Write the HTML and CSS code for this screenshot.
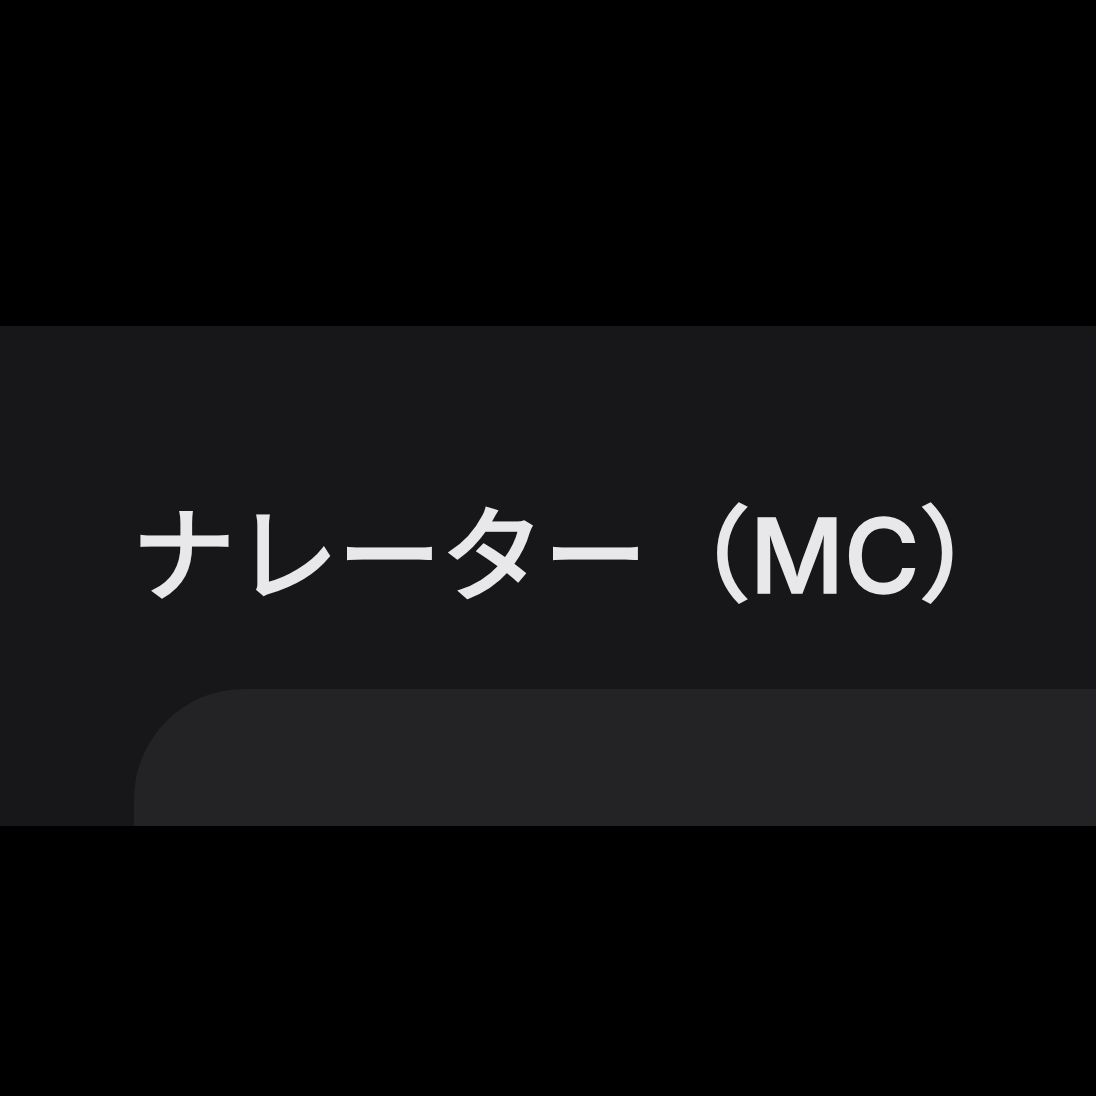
FILE: index.html
```html
<!DOCTYPE html>
<html lang="ja">
<head>
<meta charset="utf-8">
<link rel="stylesheet" href="styles.css">
</head>
<body>
<div class="band">
  <div class="title">ナレーター（<span class="latin">MC</span>）</div>
  <div class="card"></div>
</div>
</body>
</html>
```
FILE: styles.css
```css
html, body {
  margin: 0;
  padding: 0;
  background: #000;
  width: 1096px;
  height: 1096px;
  overflow: hidden;
}
.band {
  margin-top: 326px;
  height: 500px;
  background: #17171a;
  overflow: hidden;
  display: flex;
  flex-direction: column;
}
.title {
  font-family: "Noto Sans CJK JP", "Noto Sans", sans-serif;
  font-size: 103px;
  line-height: 1;
  height: 103px;
  flex: none;
  color: #e8e8ea;
  -webkit-text-stroke: 3px #e8e8ea;
  padding-left: 132px;
  margin-top: 171px;
  white-space: nowrap;
}
.latin {
  font-family: "Inter", "Noto Sans CJK JP", sans-serif;
  font-weight: 500;
  -webkit-text-stroke: 1.5px #e8e8ea;
}
.card {
  margin-top: 89px;
  margin-left: 134px;
  flex: 1;
  min-height: 200px;
  background: #232325;
  border-top-left-radius: 110px;
}
```
